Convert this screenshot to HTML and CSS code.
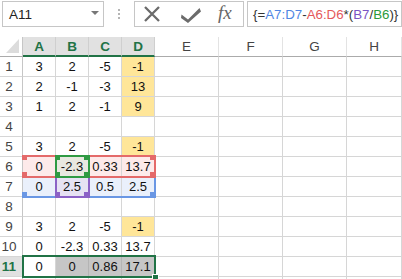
FILE: index.html
```html
<!DOCTYPE html>
<html>
<head>
<meta charset="utf-8">
<link rel="stylesheet" href="styles.css">
</head>
<body>
<div class="bar">
  <div class="namebox"><span class="name">A11</span><span class="caret"></span></div>
  <div class="grip"><i></i><i></i><i></i></div>
  <div class="btns">
    <svg class="ico-x" width="18" height="18" viewBox="0 0 18 18"><path d="M2 2 L16 16 M16 2 L2 16" stroke="#6b6b6b" stroke-width="2.3" fill="none"/></svg>
    <svg class="ico-ok" width="22" height="18" viewBox="0 0 22 18"><path d="M1.5 9.5 L8 14.5 L19.5 3 L21 6.5 L8 18 L1 13 Z" fill="#6b6b6b"/></svg>
    <span class="fx">fx</span>
  </div>
  <div class="formula"><span class="d">{=</span><span class="blue">A7:D7</span><span class="d">-</span><span class="red">A6:D6</span><span class="d">*(</span><span class="purple">B7</span><span class="d">/</span><span class="green">B6</span><span class="d">)}</span></div>
</div>

<div class="sheet">
  <div class="corner"><span class="tri"></span></div>
  <div class="ch sel">A</div><div class="ch sel">B</div><div class="ch sel">C</div><div class="ch sel">D</div>
  <div class="ch">E</div><div class="ch">F</div><div class="ch">G</div><div class="ch">H</div>

  <div class="rh">1</div><div class="c">3</div><div class="c">2</div><div class="c">-5</div><div class="c y">-1</div><div class="c"></div><div class="c"></div><div class="c"></div><div class="c"></div>
  <div class="rh">2</div><div class="c">2</div><div class="c">-1</div><div class="c">-3</div><div class="c y">13</div><div class="c"></div><div class="c"></div><div class="c"></div><div class="c"></div>
  <div class="rh">3</div><div class="c">1</div><div class="c">2</div><div class="c">-1</div><div class="c y">9</div><div class="c"></div><div class="c"></div><div class="c"></div><div class="c"></div>
  <div class="rh">4</div><div class="c"></div><div class="c"></div><div class="c"></div><div class="c"></div><div class="c"></div><div class="c"></div><div class="c"></div><div class="c"></div>
  <div class="rh">5</div><div class="c">3</div><div class="c">2</div><div class="c">-5</div><div class="c y">-1</div><div class="c"></div><div class="c"></div><div class="c"></div><div class="c"></div>
  <div class="rh">6</div><div class="c pk">0</div><div class="c gy">-2.3</div><div class="c pk">0.33</div><div class="c pk">13.7</div><div class="c"></div><div class="c"></div><div class="c"></div><div class="c"></div>
  <div class="rh">7</div><div class="c bl">0</div><div class="c pu">2.5</div><div class="c bl">0.5</div><div class="c bl">2.5</div><div class="c"></div><div class="c"></div><div class="c"></div><div class="c"></div>
  <div class="rh">8</div><div class="c"></div><div class="c"></div><div class="c"></div><div class="c"></div><div class="c"></div><div class="c"></div><div class="c"></div><div class="c"></div>
  <div class="rh">9</div><div class="c">3</div><div class="c">2</div><div class="c">-5</div><div class="c y">-1</div><div class="c"></div><div class="c"></div><div class="c"></div><div class="c"></div>
  <div class="rh">10</div><div class="c">0</div><div class="c">-2.3</div><div class="c">0.33</div><div class="c">13.7</div><div class="c"></div><div class="c"></div><div class="c"></div><div class="c"></div>
  <div class="rh rsel">11</div><div class="c">0</div><div class="c sg">0</div><div class="c sg">0.86</div><div class="c sg">17.1</div><div class="c"></div><div class="c"></div><div class="c"></div><div class="c"></div>
  <div class="rh"></div><div class="c"></div><div class="c"></div><div class="c"></div><div class="c"></div><div class="c"></div><div class="c"></div><div class="c"></div><div class="c"></div>

  <div class="hl hl-blue"><i class="bl-l"></i><i class="bl-r"></i></div>
  <div class="hl hl-purple"><i class="bl-l"></i><i class="bl-r"></i></div>
  <div class="hl hl-red"><i class="tl"></i><i class="tr"></i><i class="bl-l"></i><i class="bl-r"></i></div>
  <div class="hl hl-green"><i class="tl"></i><i class="tr"></i><i class="bl-l"></i><i class="bl-r"></i></div>
  <div class="selbox"><i class="handle"></i></div>
</div>
</body>
</html>
```

FILE: styles.css
```css
* { box-sizing: border-box; }
html, body { margin: 0; padding: 0; background: #fff; overflow: hidden; }
body { font-family: "Liberation Sans", Arial, sans-serif; width: 402px; height: 279px; }

.bar { display: flex; align-items: flex-start; height: 37px; padding-top: 1px; }
.namebox {
  margin-left: 2px; width: 102px; height: 26px;
  border: 1px solid #c6c6c6; display: flex; align-items: center;
  justify-content: space-between; padding: 0 4px 0 6px;
}
.name { font-size: 13.5px; color: #222; }
.caret { width: 0; height: 0; border-left: 4px solid transparent; border-right: 4px solid transparent; border-top: 4px solid #777; margin-top: -2px; }
.grip { width: 30px; height: 26px; display: flex; flex-direction: column; align-items: center; justify-content: center; gap: 2px; }
.grip i { display: block; width: 2px; height: 2px; background: #b5b5b5; }
.btns {
  width: 110px; height: 26px; border: 1px solid #c6c6c6;
  display: flex; align-items: center; padding-left: 8px;
}
.ico-ok { margin-left: 19px; margin-top: -1px; }
.fx { margin-left: 16px; font-family: "Liberation Serif", serif; font-style: italic; font-size: 19px; color: #666; margin-top: -3px; }
.formula {
  margin-left: 3px; flex: 1; height: 26px; border: 1px solid #c6c6c6;
  display: flex; align-items: center; padding-left: 5px; font-size: 13.3px; white-space: nowrap; overflow: hidden;
}
.d { color: #333; }
.blue { color: #4f86e3; }
.red { color: #e5575a; }
.purple { color: #7b54c4; }
.green { color: #2a9a3c; }

.sheet {
  position: relative;
  display: grid;
  grid-template-columns: 23px 33px 33px 33px 33px 64px 64px 64px 1fr;
  grid-auto-rows: 20px;
  font-size: 13px;
}
.sheet > div:not(.hl):not(.selbox) { border-right: 1px solid #d6d6d6; border-bottom: 1px solid #d6d6d6; }
.corner { position: relative; border-right-color: #c6c6c6 !important; border-bottom: 1px solid #ababab !important; }
.tri { position: absolute; right: 3px; bottom: 3px; width: 13px; height: 14px; background: #dcdcdc; clip-path: polygon(100% 0, 100% 100%, 0 100%); }
.ch { display: flex; align-items: center; justify-content: center; color: #444; font-size: 13.5px; border-bottom: 1px solid #ababab !important; border-right-color: #e3e3e3 !important; }
.ch.sel { background: #e1e1e1; color: #217346; font-weight: bold; border-bottom: 2px solid #217346 !important; border-right-color: #cfcfcf !important; }
.rh { display: flex; align-items: center; justify-content: center; padding-right: 4px; color: #444; font-size: 13.5px; border-right-color: #c6c6c6 !important; }
.rh.rsel { background: #e1e1e1; color: #217346; font-weight: bold; }
.c { display: flex; align-items: center; justify-content: center; color: #111; }
.y { background: #ffe699; }
.pk { background: #fdeaea; }
.gy { background: #e8e8e0; }
.bl { background: #eaf0fb; }
.pu { background: #e6e2f3; }
.sg { background: #c6c6c6; border-right-color: #b4b4b4 !important; }

.hl { position: absolute; border: 2px solid; }
.hl i { position: absolute; width: 5px; height: 5px; }
.hl .tl { left: -2px; top: -2px; }
.hl .tr { right: -1px; top: -2px; }
.hl .bl-l { left: -2px; bottom: -1px; }
.hl .bl-r { right: -1px; bottom: -1px; }
.hl-red { left: 22px; top: 118px; width: 134px; height: 23px; border-color: #e46a6a; border-left: none; }
.hl-red i { background: #e46a6a; }
.hl-red .tl, .hl-red .bl-l { left: 0; }
.hl-blue { left: 22px; top: 139px; width: 134px; height: 22px; border-color: #6a97e4; border-left: none; border-top: none; }
.hl-blue i { background: #6a97e4; }
.hl-blue .bl-l { left: 0; }
.hl-green { left: 55px; top: 118px; width: 35px; height: 23px; border-color: #2f9a43; }
.hl-green i { background: #2f9a43; }
.hl-purple { left: 55px; top: 139px; width: 35px; height: 22px; border-color: #8b62c6; border-top: none; }
.hl-purple i { background: #8b62c6; }

.selbox { position: absolute; left: 22px; top: 218px; width: 134px; height: 23px; border: 2px solid #217346; }
.handle { position: absolute; right: -5px; bottom: -5px; width: 7px; height: 7px; background: #217346; border: 1px solid #fff; }
```
